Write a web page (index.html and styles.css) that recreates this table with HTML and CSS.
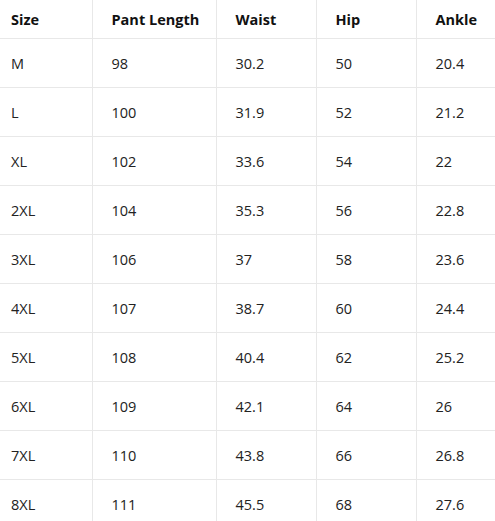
FILE: index.html
```html
<!DOCTYPE html>
<html>
<head>
<meta charset="utf-8">
<link rel="stylesheet" href="styles.css">
</head>
<body>
<table class="size-table">
  <colgroup>
    <col class="c1"><col class="c2"><col class="c3"><col class="c4"><col class="c5">
  </colgroup>
  <thead>
    <tr><th>Size</th><th>Pant Length</th><th>Waist</th><th>Hip</th><th>Ankle</th></tr>
  </thead>
  <tbody>
    <tr><td>M</td><td>98</td><td>30.2</td><td>50</td><td>20.4</td></tr>
    <tr><td>L</td><td>100</td><td>31.9</td><td>52</td><td>21.2</td></tr>
    <tr><td>XL</td><td>102</td><td>33.6</td><td>54</td><td>22</td></tr>
    <tr><td>2XL</td><td>104</td><td>35.3</td><td>56</td><td>22.8</td></tr>
    <tr><td>3XL</td><td>106</td><td>37</td><td>58</td><td>23.6</td></tr>
    <tr><td>4XL</td><td>107</td><td>38.7</td><td>60</td><td>24.4</td></tr>
    <tr><td>5XL</td><td>108</td><td>40.4</td><td>62</td><td>25.2</td></tr>
    <tr><td>6XL</td><td>109</td><td>42.1</td><td>64</td><td>26</td></tr>
    <tr><td>7XL</td><td>110</td><td>43.8</td><td>66</td><td>26.8</td></tr>
    <tr><td>8XL</td><td>111</td><td>45.5</td><td>68</td><td>27.6</td></tr>
  </tbody>
</table>
</body>
</html>
```
FILE: styles.css
```css
html, body {
  margin: 0;
  padding: 0;
  background: #fff;
}
body {
  font-family: "Segoe UI", "Open Sans", "Noto Sans", sans-serif;
  font-size: 14.5px;
  color: #222;
  overflow: hidden;
}
.size-table {
  border-collapse: collapse;
  table-layout: fixed;
  width: 495px;
}
.c1 { width: 92px; }
.c2 { width: 124px; }
.c3 { width: 100px; }
.c4 { width: 100px; }
.c5 { width: 79px; }
.size-table th,
.size-table td {
  text-align: left;
  padding: 0 0 0 19px;
  border-right: 1px solid #e8e8e8;
  border-bottom: 1px solid #e8e8e8;
  white-space: nowrap;
  overflow: hidden;
}
.size-table th:first-child,
.size-table td:first-child {
  padding-left: 11px;
}
.size-table th:last-child,
.size-table td:last-child {
  border-right: none;
}
.size-table th {
  height: 38px;
  font-weight: 700;
  color: #111;
}
.size-table td {
  height: 48px;
  font-weight: 400;
  color: #222;
}
```
